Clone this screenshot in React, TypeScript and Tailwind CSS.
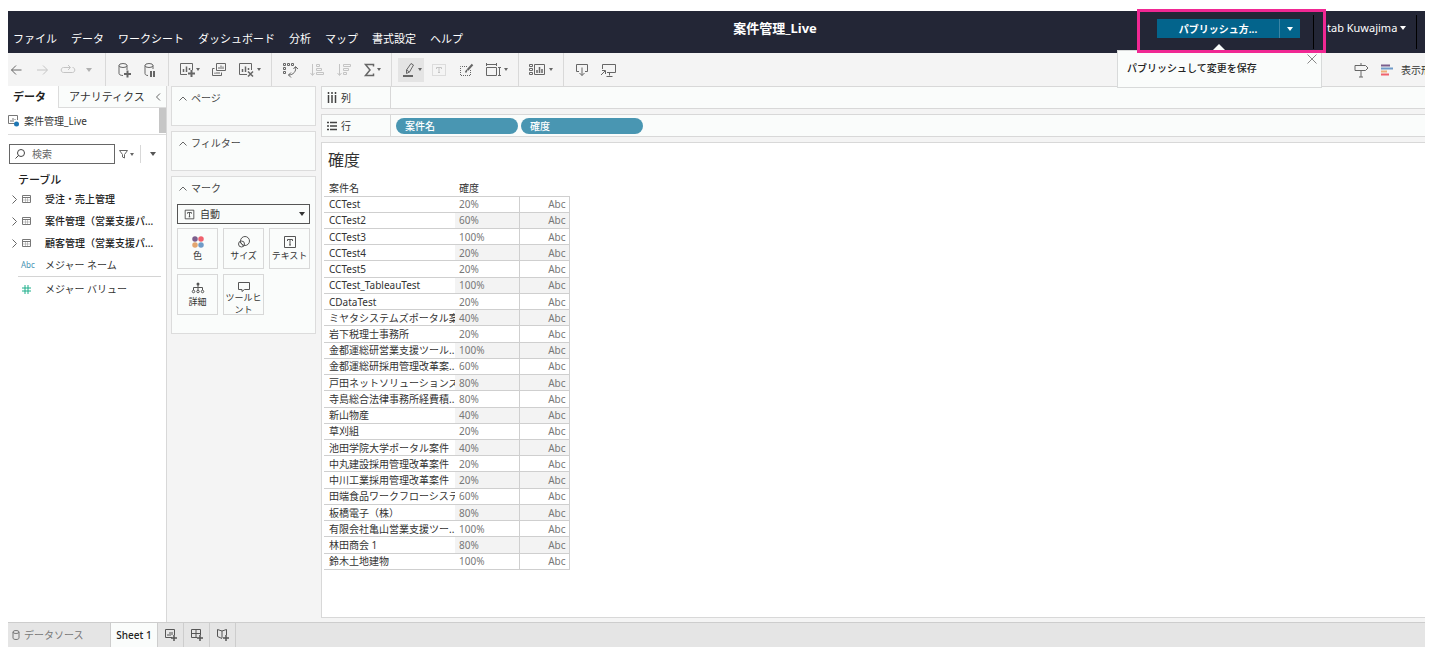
import type { ReactNode } from 'react';

const rows: [string, string][] = [
    ['CCTest', '20%'],
    ['CCTest2', '60%'],
    ['CCTest3', '100%'],
    ['CCTest4', '20%'],
    ['CCTest5', '20%'],
    ['CCTest_TableauTest', '100%'],
    ['CDataTest', '20%'],
    ['ミヤタシステムズポータル案', '40%'],
    ['岩下税理士事務所', '20%'],
    ['金都運総研営業支援ツール..', '100%'],
    ['金都運総研採用管理改革案..', '60%'],
    ['戸田ネットソリューションズ', '80%'],
    ['寺島総合法律事務所経費積..', '80%'],
    ['新山物産', '40%'],
    ['草刈組', '20%'],
    ['池田学院大学ポータル案件', '40%'],
    ['中丸建設採用管理改革案件', '20%'],
    ['中川工業採用管理改革案件', '20%'],
    ['田端食品ワークフローシステ', '60%'],
    ['板橋電子（株）', '80%'],
    ['有限会社亀山営業支援ツー..', '100%'],
    ['林田商会 1', '80%'],
    ['鈴木土地建物', '100%'],
];

const menus = ['ファイル', 'データ', 'ワークシート', 'ダッシュボード', '分析', 'マップ', '書式設定', 'ヘルプ'];
const tables = ['受注・売上管理', '案件管理（営業支援パ...', '顧客管理（営業支援パ...'];

function Icon({ w = 16, h = 16, className = '', children }: { w?: number; h?: number; className?: string; children: ReactNode }) {
    return (
        <svg width={w} height={h} viewBox={`0 0 ${w} ${h}`} fill="none" stroke="currentColor" className={`shrink-0 ${className}`} aria-hidden="true">
            {children}
        </svg>
    );
}

function Caret({ className = '' }: { className?: string }) {
    return (
        <Icon w={6} h={4} className={className}>
            <path d="M0 0h6L3 4z" fill="currentColor" stroke="none" />
        </Icon>
    );
}

function SmallCaret() {
    return (
        <Icon w={4} h={3}>
            <path d="M0 0h4L2 3z" fill="currentColor" stroke="none" />
        </Icon>
    );
}

function Tool({ label, className = '', children }: { label: string; className?: string; children: ReactNode }) {
    return (
        <button aria-label={label} className={`flex shrink-0 items-center ${className}`}>
            {children}
        </button>
    );
}

function Group({ first = false, wide = false, children }: { first?: boolean; wide?: boolean; children: ReactNode }) {
    return (
        <div className={`flex shrink-0 items-center ${wide ? 'gap-[11px]' : 'gap-[10px]'} ${first ? 'pr-[13px]' : 'border-l border-[#d9d9d9] px-[10px]'}`}>
            {children}
        </div>
    );
}

function TextBox({ size = 14 }: { size?: number }) {
    return (
        <svg width={size} height={size} viewBox="0 0 14 14" fill="none" stroke="currentColor" className="shrink-0" aria-hidden="true">
            <path d="M1.5 1.5h11v11h-11zM4.5 6V4.5h5V6M7 4.5v5.5M6 10h2" />
        </svg>
    );
}

function Toolbar() {
    return (
        <div className="flex h-[33px] shrink-0 overflow-hidden bg-[#f4f4f4] text-[#666]">
            <Group first>
                <Tool label="元に戻す">
                    <Icon><path d="M13.5 8H3.5M8 3.5L3.5 8L8 12.5" /></Icon>
                </Tool>
                <Tool label="やり直し" className="text-[#c4c4c4]">
                    <Icon><path d="M3 8h10M9 3.5L13.5 8L9 12.5" /></Icon>
                </Tool>
                <Tool label="再生" className="text-[#c4c4c4]">
                    <Icon><path d="M10 5.5H3.500C.5 5.500 .5 10.500 3.500 10.500h9c3 0 3-5 0-5M8 3l2.500 2.500L8 8" /></Icon>
                </Tool>
                <Tool label="再生オプション" className="text-[#b0b0b0]"><Caret /></Tool>
            </Group>
            <Group>
                <Tool label="新しいデータ ソース">
                    <Icon>
                        <ellipse cx="7" cy="3.5" rx="4" ry="2" />
                        <path d="M3 3.5v8c0 1 1.5 2 4 2M11 3.5V8" />
                        <path d="M11.5 8.5v7M8 12h7" strokeWidth="2" />
                    </Icon>
                </Tool>
                <Tool label="自動更新の一時停止">
                    <Icon>
                        <ellipse cx="7" cy="3.5" rx="4" ry="2" />
                        <path d="M3 3.5v8c0 1 1 2 3 2M11 3.5V7" />
                        <path d="M9 9v6M12 9v6" strokeWidth="2" />
                    </Icon>
                </Tool>
            </Group>
            <Group wide>
                <Tool label="新しいワークシート" className="gap-px">
                    <Icon>
                        <path d="M8 12.5H1.5v-11h12V8" />
                        <path d="M4.5 10V7M7.5 10V4.5M10.5 8V6" strokeWidth="1.5" />
                        <path d="M12.5 8v7M9 11.5h7" strokeWidth="2" />
                    </Icon>
                    <SmallCaret />
                </Tool>
                <Tool label="複製">
                    <Icon>
                        <path d="M5.5 1.5h9v7h-9zM3.5 6.5h-2v7h9v-3" />
                        <path d="M8 7V5M10 7V3.5M12 7V4.5M4 12v-1.500M6 12v-2M8 12v-2" />
                    </Icon>
                </Tool>
                <Tool label="シートのクリア" className="gap-[3px]">
                    <Icon>
                        <path d="M9 12.5H1.5v-11h12V8" />
                        <path d="M4.5 10V7M7.5 10V4.5M10.5 8V6" strokeWidth="1.5" />
                        <path d="M10 9.5l5 5M15 9.5l-5 5" strokeWidth="1.5" />
                    </Icon>
                    <SmallCaret />
                </Tool>
            </Group>
            <Group wide>
                <Tool label="行と列の交換">
                    <Icon>
                        <path d="M1.5 1.5h2v2h-2zM5.5 1.5h2v2h-2zM9.5 1.5h2v2h-2zM1.5 5.5h2v2h-2zM1.5 9.5h2v2h-2z" />
                        <path d="M13.5 5c1 4-2 8-7 8M11.5 7l2-2.5L16 7M9 10.5L6.5 13L9 15.5" />
                    </Icon>
                </Tool>
                <Tool label="昇順" className="text-[#c4c4c4]">
                    <Icon><path d="M3.5 2v11M1.5 11l2 2.5l2-2.5M7.5 2.5h3v2h-3zM7.5 6.5h5v2h-5zM7.5 10.5h7v2h-7z" /></Icon>
                </Tool>
                <Tool label="降順" className="text-[#c4c4c4]">
                    <Icon><path d="M3.5 2v11M1.5 11l2 2.5l2-2.5M7.5 2.5h7v2h-7zM7.5 6.5h5v2h-5zM7.5 10.5h3v2h-3z" /></Icon>
                </Tool>
                <Tool label="合計" className="gap-px">
                    <Icon w={13} h={16}><path d="M10.5 4.5V2.5H2.5L7 8l-4.5 5.5h8v-2" strokeWidth="1.5" /></Icon>
                    <SmallCaret />
                </Tool>
            </Group>
            <Group wide>
                <Tool label="ハイライト" className="-mx-1 h-6 w-[26px] justify-center gap-px bg-[#e4e4e4]">
                    <Icon>
                        <path d="M10 1.5l2.5 1.5l-4 7l-3 1.5v-3.5zM5.5 8l3 2" />
                        <path d="M2 14h10" strokeWidth="2" />
                    </Icon>
                    <SmallCaret />
                </Tool>
                <Tool label="マーク ラベル" className="text-[#c4c4c4]">
                    <Icon>
                        <path d="M1.5 2.5h13v11h-13z" strokeDasharray="1 1" />
                        <path d="M5.5 7V5.5h5V7M8 5.5v5M7 10.5h2" />
                    </Icon>
                </Tool>
                <Tool label="書式">
                    <Icon>
                        <path d="M9 4.5H2.5v9h10V8" strokeDasharray="1 1" />
                        <path d="M14.5 2.5L9.500 8" strokeWidth="2" />
                        <path d="M9 8l-1.500 2.500" strokeWidth="1.5" />
                    </Icon>
                </Tool>
                <Tool label="サイズに合わせる" className="gap-[3px]">
                    <Icon><path d="M1.5 5.5h10v8h-10zM1 2.5h11M1.5 1v3M11.5 1v3M14.5 5v9M13 5.5h3M13 13.5h3" /></Icon>
                    <SmallCaret />
                </Tool>
            </Group>
            <Group>
                <Tool label="カードの表示" className="gap-1">
                    <Icon>
                        <path d="M.5 2.5h3v2h-3zM.5 6.5h3v2h-3zM.5 10.5h3v2h-3zM5.5 2.5h10v10h-10z" />
                        <path d="M8 11V8M10.5 11V5M13 11V7" strokeWidth="1.5" />
                    </Icon>
                    <SmallCaret />
                </Tool>
            </Group>
            <Group>
                <Tool label="ダウンロード">
                    <Icon><path d="M5 9.5H2.500v-7h11v7H11M8 5.5v8M5.500 11L8 13.500L10.500 11" /></Icon>
                </Tool>
                <Tool label="プレゼンテーション">
                    <Icon><path d="M2.5 7V2.5h13v8H7M9.5 10.5v3M6.5 14.5h6M1 13l4-4M2 8.5h3.5V12" /></Icon>
                </Tool>
            </Group>
            <div className="ml-auto flex w-[72px] shrink-0 items-center gap-3 overflow-hidden">
                <Tool label="データ ガイド">
                    <Icon><path d="M8 1v2M8 8.5V15M6 15h4M2 3.5h10.5L15 6l-2.500 2.500H2z" /></Icon>
                </Tool>
                <button className="flex shrink-0 items-center gap-2 text-[#333]">
                    <Icon w={12} h={12}>
                        <path d="M0 1.5h9" stroke="#7b5e8c" strokeWidth="2" />
                        <path d="M0 4.5h12" stroke="#6f9bc8" strokeWidth="2" />
                        <path d="M0 7.5h6" stroke="#eeb07a" strokeWidth="2" />
                        <path d="M0 10.5h8" stroke="#f0616d" strokeWidth="2" />
                    </Icon>
                    <span className="whitespace-nowrap">表示形式</span>
                </button>
            </div>
        </div>
    );
}

function Header() {
    return (
        <header className="flex h-[42px] shrink-0 bg-[#232636] text-white">
            <nav className="flex items-end gap-[14px] pb-[6px] pl-[5px] text-[11px] leading-4">
                {menus.map((m) => (
                    <button key={m} className="whitespace-nowrap">{m}</button>
                ))}
            </nav>
            <h1 className="flex-1 pt-[9px] text-center text-[13px] leading-4 font-bold">案件管理_Live</h1>
            <div className="flex w-[338px] justify-end">
                <div className="relative w-[156px] pt-2">
                    <div className="flex h-[19px] w-[143px] bg-[#03648c]">
                        <button className="flex-1 text-center leading-4 font-bold">パブリッシュ方...</button>
                        <button aria-label="パブリッシュ オプション" className="flex w-[21px] items-center justify-center border-l border-[#3b85a5]">
                            <Caret />
                        </button>
                    </div>
                    {/* publish hint, hangs under the button */}
                    <div className="absolute top-[39px] -left-10 z-10 flex h-[38px] w-[205px] items-start justify-between border border-[#d8dada] bg-[#fafcfb] pt-[9px] pl-[9px] text-[#222]">
                        <Icon w={14} h={7} className="absolute -top-[7px] left-[94px] text-[#fafcfb]">
                            <path d="M7 0l7 7H0z" fill="currentColor" stroke="none" />
                        </Icon>
                        <p className="leading-4 font-medium whitespace-nowrap">パブリッシュして変更を保存</p>
                        <button aria-label="閉じる" className="-mt-[6px] mr-1 text-[#888]">
                            <Icon w={10} h={10}><path d="M.5 .5l9 9M9.5 .5l-9 9" /></Icon>
                        </button>
                    </div>
                    <div className="pointer-events-none absolute -top-[2px] -left-5 z-20 h-11 w-[189px] border-[3px] border-[#f02893]"></div>
                </div>
                <button className="my-1 flex w-[104px] items-start gap-[3px] border-x border-black pt-[5px] pl-[13px] whitespace-nowrap">
                    <span className="text-[11px] leading-4">tab Kuwajima</span>
                    <Caret className="mt-[6px]" />
                </button>
                <div className="w-2"></div>
            </div>
        </header>
    );
}

function TableIcon() {
    return (
        <Icon w={9} h={8} className="text-[#777]">
            <path d="M.5 .5h8v7h-8z" />
            <path d="M1 2.5h7" />
            <path d="M3.5 3v4M5.5 3v4M1 5h7" strokeOpacity=".4" />
        </Icon>
    );
}

function DataPane() {
    return (
        <aside className="flex w-[159px] shrink-0 flex-col border-r border-[#d8d8d8] bg-white text-[#333]">
            <div className="flex h-[22px] text-[11px] leading-[22px]">
                <button className="w-[50px] pl-[5px] text-left font-bold text-[#222]">データ</button>
                <button className="flex flex-1 items-center justify-between border-b border-l border-[#dcdcdc] bg-[#fafcfb] pr-[5px] pl-[10px]">
                    アナリティクス
                    <Icon w={6} h={8} className="text-[#666]"><path d="M5 .5L1.5 4L5 7.5" /></Icon>
                </button>
            </div>
            <div className="flex h-[27px] items-start border-b border-[#dcdcdc]">
                <button className="flex h-[26px] flex-1 items-center gap-1">
                    <Icon w={12} h={14} className="text-[#777]">
                        <path d="M7 9.5H.5v-8h9V6M3 8V6M5 8V4M7 6V5" />
                        <circle cx="8.5" cy="10" r="2.5" fill="#1f77b4" stroke="none" />
                    </Icon>
                    案件管理_Live
                </button>
                <div className="h-[25px] w-[7px] bg-[#c6c6c6]"></div>
            </div>
            <div className="mt-[9px] flex items-center pl-px">
                <label className="flex h-5 w-[106px] items-center gap-[7px] border border-[#666] pl-[5px]">
                    <Icon w={10} h={10} className="text-[#444]">
                        <circle cx="6" cy="4" r="3.5" />
                        <path d="M3.5 6.5L.5 9.5" />
                    </Icon>
                    <input type="text" aria-label="検索" placeholder="検索" className="w-full min-w-0 outline-none placeholder:text-[#666]" />
                </label>
                <button aria-label="フィルター" className="ml-1 flex items-center gap-px text-[#666]">
                    <Icon w={10} h={9}><path d="M.5 .5h8L5.500 4.500V8l-2-1V4.500z" /></Icon>
                    <SmallCaret />
                </button>
                <button aria-label="表示オプション" className="ml-[6px] flex h-[18px] items-center border-l border-[#d8d8d8] pl-[9px] text-[#555]">
                    <Caret />
                </button>
            </div>
            <h2 className="mt-2 pl-[10px] text-[11px] leading-4 font-medium text-[#222]">テーブル</h2>
            <ul className="font-medium text-[#222]">
                {tables.map((t) => (
                    <li key={t}>
                        <button className="flex h-[22px] w-full items-center pl-1 whitespace-nowrap">
                            <Icon w={5} h={9} className="mr-[5px] text-[#666]"><path d="M.5 .5L4.5 4.5L.5 8.5" /></Icon>
                            <TableIcon />
                            <span className="ml-[14px]">{t}</span>
                        </button>
                    </li>
                ))}
            </ul>
            <button className="mr-[5px] ml-[10px] flex h-[23px] items-center border-b border-[#d4d4d4] text-left">
                <span className="w-[27px] pl-[3px] text-[8px] text-[#4a94b4]">Abc</span>
                メジャー ネーム
            </button>
            <button className="mr-[5px] ml-[10px] flex h-6 items-center text-left">
                <span className="w-[27px] pl-[4px] text-[#1dae8a]">
                    <Icon w={9} h={9}><path d="M3 0v9M6 0v9M0 3h9M0 6h9" /></Icon>
                </span>
                メジャー バリュー
            </button>
        </aside>
    );
}

function CardTitle({ children }: { children: ReactNode }) {
    return (
        <h2 className="flex h-[22px] items-center gap-1 pl-[7px]">
            <Icon w={8} h={5} className="text-[#666]"><path d="M.5 4.5L4 1L7.5 4.5" /></Icon>
            {children}
        </h2>
    );
}

function MarkButton({ label, children }: { label: string; children: ReactNode }) {
    return (
        <button className="flex h-[41px] flex-col items-center border border-[#d8d8d8] pt-[6px] text-[#555]">
            {children}
            <span className="text-center text-[9px] leading-3 text-[#333]">{label}</span>
        </button>
    );
}

function Cards() {
    return (
        <div className="w-[145px] shrink-0 space-y-[5px] text-[#444]">
            <section className="h-10 border border-[#dcdcdc] bg-[#fafcfb]"><CardTitle>ページ</CardTitle></section>
            <section className="h-10 border border-[#dcdcdc] bg-[#fafcfb]"><CardTitle>フィルター</CardTitle></section>
            <section className="h-[158px] border border-[#dcdcdc] bg-[#fafcfb]">
                <CardTitle>マーク</CardTitle>
                <div className="px-[5px] pt-[5px]">
                    <label className="flex h-5 items-center gap-[5px] border border-[#555] px-[6px] text-[#333]">
                        <TextBox size={11} />
                        <select aria-label="マーク タイプ" className="min-w-0 flex-1 appearance-none outline-none"><option>自動</option></select>
                        <Caret className="-mr-[2px]" />
                    </label>
                    <div className="mt-1 grid grid-cols-3 gap-[5px]">
                        <MarkButton label="色">
                            <Icon w={14} h={14} className="mb-px">
                                <g stroke="none">
                                    <circle cx="4" cy="4" r="2.75" fill="#7b5e8c" />
                                    <circle cx="10" cy="4" r="2.75" fill="#f0616d" />
                                    <circle cx="4" cy="10" r="2.75" fill="#e3a670" />
                                    <circle cx="10" cy="10" r="2.75" fill="#6f9bc8" />
                                </g>
                            </Icon>
                        </MarkButton>
                        <MarkButton label="サイズ">
                            <Icon w={14} h={14} className="mb-px">
                                <circle cx="8" cy="6" r="4.5" />
                                <circle cx="4.5" cy="9" r="3" />
                                <path d="M3 7l3.5 4" />
                            </Icon>
                        </MarkButton>
                        <MarkButton label="テキスト"><span className="mb-px"><TextBox /></span></MarkButton>
                        <MarkButton label="詳細">
                            <Icon w={14} h={14} className="mb-px">
                                <circle cx="7" cy="3" r="1.5" fill="currentColor" stroke="none" />
                                <path d="M7 4v5M2.5 9V6.5h9V9" />
                                <circle cx="2.5" cy="10.5" r="1.25" />
                                <circle cx="7" cy="10.5" r="1.25" />
                                <circle cx="11.5" cy="10.5" r="1.25" />
                            </Icon>
                        </MarkButton>
                        <MarkButton label="ツールヒント">
                            <Icon w={12} h={11}><path d="M.5 1.5h11v7h-5L4 10.5V8.5H.5z" /></Icon>
                        </MarkButton>
                    </div>
                </div>
            </section>
        </div>
    );
}

function Shelf({ label, icon, children }: { label: string; icon: ReactNode; children?: ReactNode }) {
    return (
        <section className="flex h-[23px] shrink-0 border border-r-0 border-[#d8d8d8] bg-[#fafcfb]">
            <h2 className="flex w-[69px] items-center gap-1 border-r border-[#d8d8d8] pl-[5px] text-[#333]">
                {icon}
                {label}
            </h2>
            <div className="flex items-center gap-[3px] pl-[5px]">{children}</div>
        </section>
    );
}

function Pill({ children }: { children: ReactNode }) {
    return <button className="h-4 w-[122px] rounded-full bg-[#4996b2] pl-[9px] text-left leading-4 font-medium text-white">{children}</button>;
}

function Sheet() {
    return (
        <main className="flex min-w-0 flex-1 flex-col gap-[5px]">
            <Shelf label="列" icon={<Icon w={10} h={11} className="text-[#444]"><path d="M1.5 0v2M5 0v2M8.5 0v2M1.5 3v8M5 3v8M8.5 3v8" strokeWidth="1.5" /></Icon>} />
            <Shelf label="行" icon={<Icon w={10} h={10} className="text-[#444]"><path d="M0 1.5h2M0 5h2M0 8.5h2M3 1.5h7M3 5h7M3 8.5h7" strokeWidth="1.5" /></Icon>}>
                <Pill>案件名</Pill>
                <Pill>確度</Pill>
            </Shelf>
            <section className="min-h-0 flex-1 border border-r-0 border-[#d8d8d8] bg-white">
                <h2 className="pt-[5px] pl-[6px] text-base leading-6 text-[#333]">確度</h2>
                <table className="mt-2 ml-[2px] h-[390px] w-[245px] table-fixed border-collapse leading-[14px] text-[#333]">
                    <thead>
                        <tr className="h-4 text-left">
                            <th className="w-[131px] pl-[5px] font-normal">案件名</th>
                            <th className="w-16 pl-1 font-normal">確度</th>
                            <th className="w-[50px]" aria-label="値"></th>
                        </tr>
                    </thead>
                    <tbody>
                        {rows.map(([name, rate]) => (
                            <tr key={name} className="group border-y border-[#cfcfcf]">
                                <td className="overflow-hidden pl-[5px] whitespace-nowrap">{name}</td>
                                <td className="pl-1 text-[#777] group-even:bg-[#f3f3f3]">{rate}</td>
                                <td className="border-x border-[#cfcfcf] pr-[3px] text-right text-[#777] group-even:bg-[#f3f3f3]">Abc</td>
                            </tr>
                        ))}
                    </tbody>
                </table>
            </section>
        </main>
    );
}

function Footer() {
    const tab = 'flex w-[26px] items-center justify-center border-r border-[#cdcdcd]';
    return (
        <footer className="flex h-[25px] shrink-0 border-t border-[#cdcdcd] bg-[#e5e5e5] text-[#555]">
            <button className="flex w-[103px] items-center gap-1 border-r border-[#cdcdcd] pl-1 text-[#777]">
                <Icon w={8} h={10}>
                    <ellipse cx="4" cy="2" rx="3" ry="1.5" />
                    <path d="M1 2v6c0 2 6 2 6 0V2" />
                </Icon>
                データソース
            </button>
            <button className="w-[47px] border-r border-[#cdcdcd] bg-[#fafcfb] font-medium text-[#222]">Sheet 1</button>
            <button aria-label="新しいワークシート" className={tab}>
                <Icon w={14} h={14}>
                    <path d="M8 9.5H1.5v-8h9V7M4 8V6M6 8V4M8 7V4" />
                    <path d="M10 7v6M7 10h6" strokeWidth="1.5" />
                </Icon>
            </button>
            <button aria-label="新しいダッシュボード" className={tab}>
                <Icon w={14} h={14}>
                    <path d="M7 9.5H1.5v-8h9V7M1.5 5.5h9M6 1.5v8" />
                    <path d="M10 7v6M7 10h6" strokeWidth="1.5" />
                </Icon>
            </button>
            <button aria-label="新しいストーリー" className={tab}>
                <Icon w={14} h={14}>
                    <path d="M6 10.5l-4.5-2v-7L6 3l4.5-1.5V7M6 3v7" />
                    <path d="M10 7v6M7 10h6" strokeWidth="1.5" />
                </Icon>
            </button>
        </footer>
    );
}

export default function App() {
    return (
        <div className="flex h-screen flex-col overflow-hidden bg-white px-2 pt-[11px] pb-[7px] font-['Noto_Sans','Noto_Sans_CJK_JP',sans-serif] text-[10px] leading-4">
            <Header />
            <Toolbar />
            <div className="flex min-h-0 flex-1 bg-[#f4f4f4]">
                <DataPane />
                <div className="flex min-w-0 flex-1 gap-[5px] pb-1 pl-1">
                    <Cards />
                    <Sheet />
                </div>
            </div>
            <Footer />
        </div>
    );
}
